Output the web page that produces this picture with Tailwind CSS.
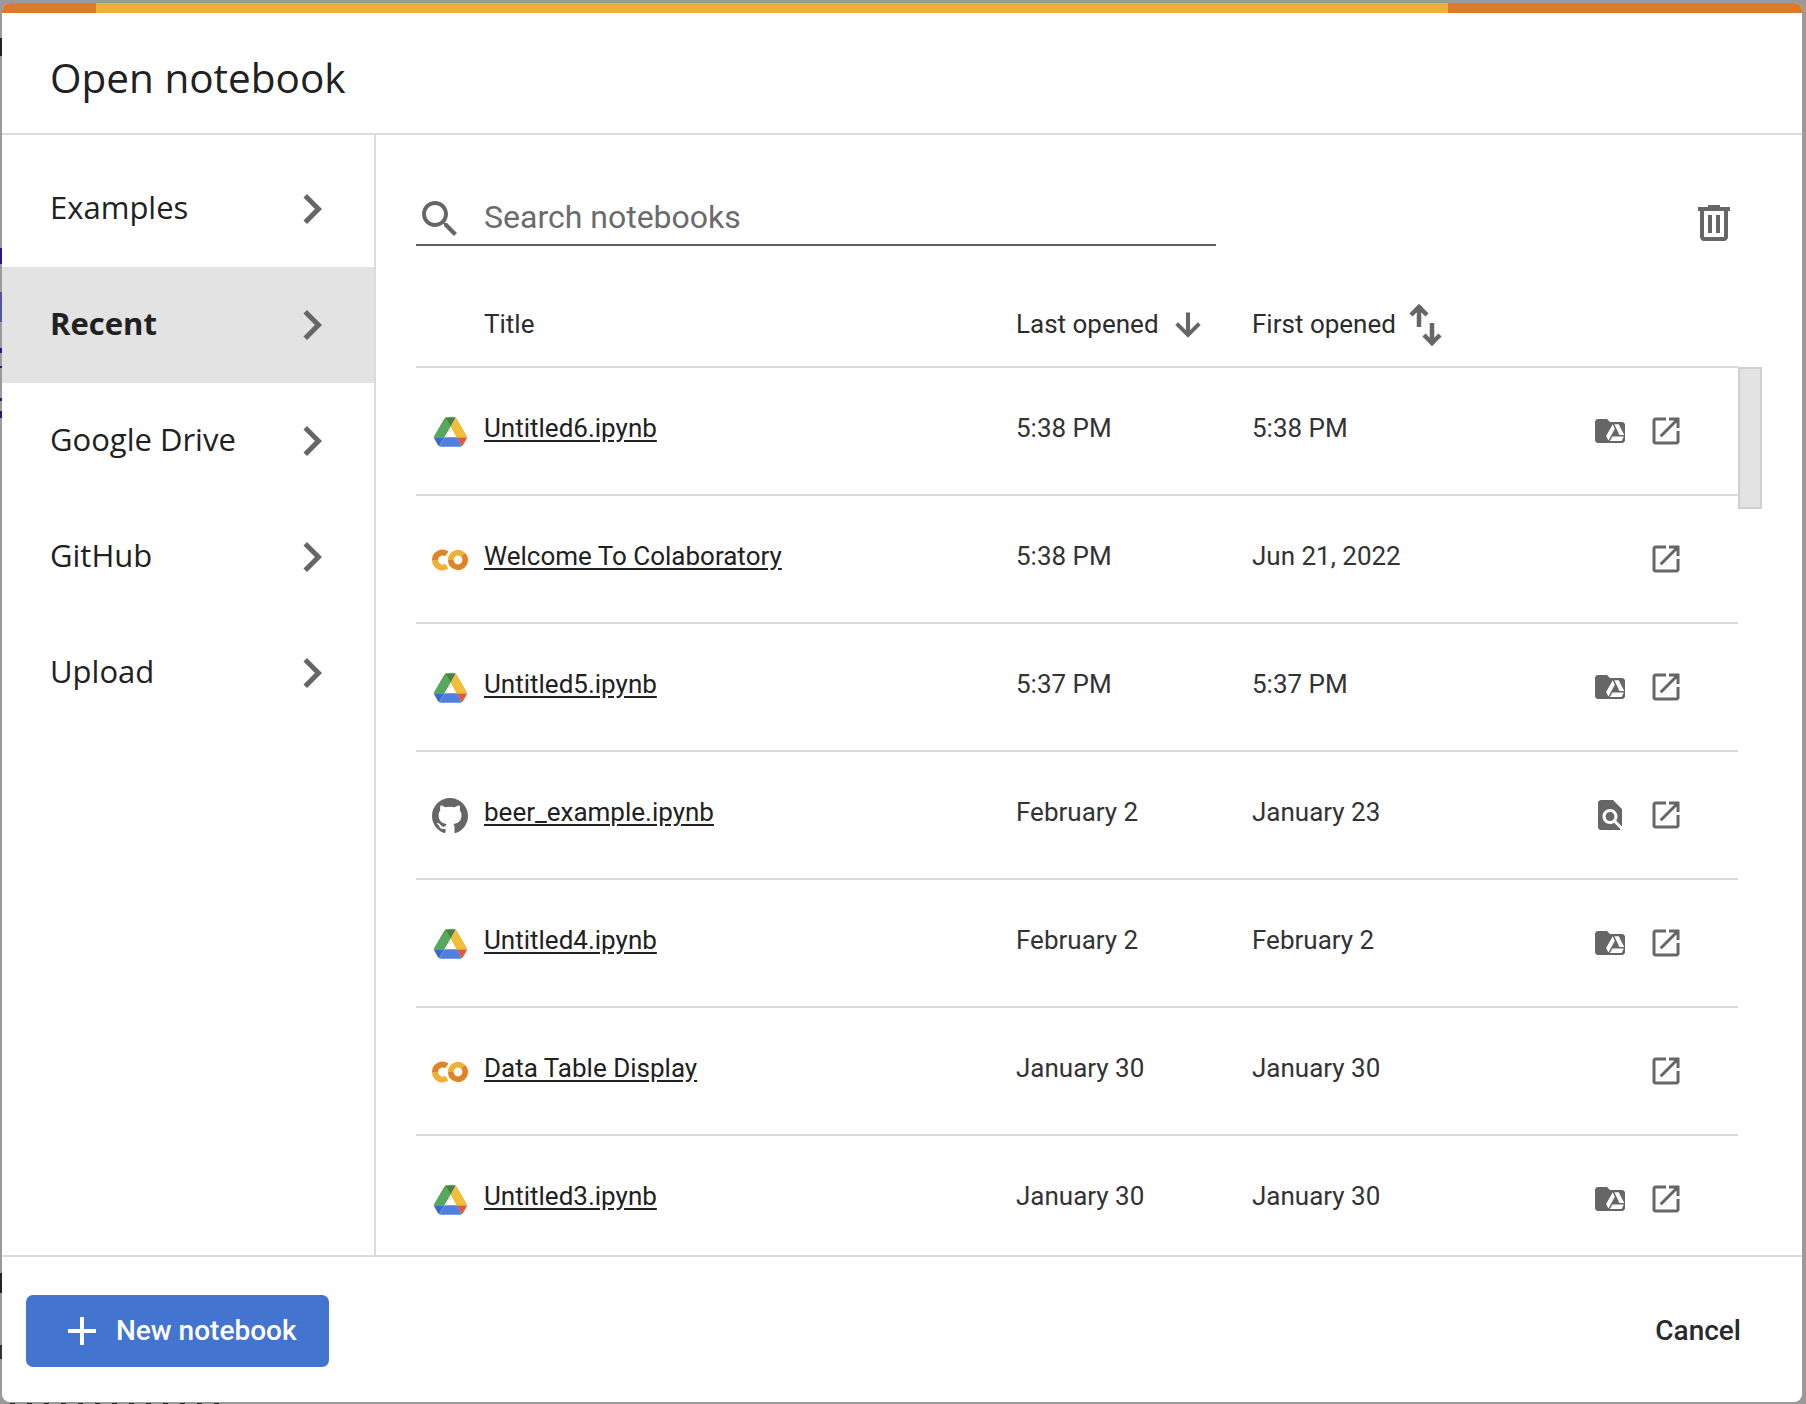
<!DOCTYPE html>
<html lang="en">
<head>
<meta charset="UTF-8">
<title>Open notebook</title>
<script src="https://cdn.jsdelivr.net/npm/@tailwindcss/browser@4"></script>
</head>
<body class="relative w-[1806px] h-[1404px] overflow-hidden bg-[#9a9a9a] font-['Roboto',sans-serif] text-[#212121]">
<svg class="hidden">
  <symbol id="chev" viewBox="0 0 24 24"><path d="M10 6L8.59 7.41 13.17 12l-4.58 4.59L10 18l6-6z"/></symbol>
  <symbol id="open" viewBox="0 0 24 24"><path d="M19 19H5V5h7V3H5c-1.11 0-2 .9-2 2v14c0 1.1.89 2 2 2h14c1.1 0 2-.9 2-2v-7h-2v7zM14 3v2h3.59l-9.83 9.83 1.41 1.41L19 6.41V10h2V3h-7z"/></symbol>
  <symbol id="folder" viewBox="0 0 24 24">
    <path d="M20 6h-8l-2-2H4c-1.1 0-2 .9-2 2v12c0 1.1.9 2 2 2h16c1.1 0 2-.9 2-2V8c0-1.1-.9-2-2-2z"/>
    <path fill="#fff" d="M13.9 7.5L9.4 15.3l1.5 3 4.3-7.6zM14.9 7.5h2.9l3.7 7.2h-3.2zM11.9 18.6l1.7-3h7.7l-1.6 3z"/>
  </symbol>
  <symbol id="drive" viewBox="0 0 87.3 78">
    <path d="m6.6 66.85 3.85 6.65c.8 1.4 1.95 2.5 3.3 3.3l13.75-23.8h-27.5c0 1.55.4 3.1 1.2 4.5z" fill="#3f68c7"/>
    <path d="m43.65 25-13.75-23.8c-1.35.8-2.5 1.9-3.3 3.3l-25.4 44a9.06 9.06 0 0 0 -1.2 4.5h27.5z" fill="#57a85c"/>
    <path d="m73.55 76.8c1.35-.8 2.5-1.9 3.3-3.3l1.6-2.75 7.65-13.25c.8-1.4 1.2-2.95 1.2-4.5h-27.502l5.852 11.5z" fill="#d9603f"/>
    <path d="m43.65 25 13.75-23.8c-1.35-.8-2.9-1.2-4.5-1.2h-18.5c-1.6 0-3.15.45-4.5 1.2z" fill="#3d8445"/>
    <path d="m59.8 53h-32.3l-13.75 23.8c1.35.8 2.9 1.2 4.5 1.2h50.8c1.6 0 3.15-.45 4.5-1.2z" fill="#4f7fe0"/>
    <path d="m73.4 26.5-12.7-22c-.8-1.4-1.95-2.5-3.3-3.3l-13.75 23.8 16.15 28h27.45c0-1.55-.4-3.1-1.2-4.5z" fill="#f0bd3d"/>
  </symbol>
  <symbol id="colab" viewBox="0 0 36 22">
    <g fill="none">
      <path d="M14.8 4.9A7.5 7.5 0 0 0 3 11" stroke="#e08327" stroke-width="6"/>
      <path d="M3 11A7.5 7.5 0 0 0 14.8 17.1" stroke="#efb035" stroke-width="6"/>
      <path d="M18.8 11A7.2 7.2 0 0 1 31 5.8" stroke="#efb035" stroke-width="5.6"/>
      <path d="M31 5.8A7.2 7.2 0 1 1 18.8 11" stroke="#e08327" stroke-width="5.6"/>
    </g>
  </symbol>
  <symbol id="github" viewBox="0 0 16 16"><path d="M8 0C3.58 0 0 3.58 0 8c0 3.54 2.29 6.53 5.47 7.59.4.07.55-.17.55-.38 0-.19-.01-.82-.01-1.49-2.01.37-2.53-.49-2.69-.94-.09-.23-.48-.94-.82-1.13-.28-.15-.68-.52-.01-.53.63-.01 1.08.58 1.23.82.72 1.21 1.87.87 2.33.66.07-.52.28-.87.51-1.07-1.78-.2-3.64-.89-3.64-3.95 0-.87.31-1.59.82-2.15-.08-.2-.36-1.02.08-2.12 0 0 .67-.21 2.2.82.64-.18 1.32-.27 2-.27.68 0 1.36.09 2 .27 1.53-1.04 2.2-.82 2.2-.82.44 1.1.16 1.92.08 2.12.51.56.82 1.27.82 2.15 0 3.07-1.87 3.75-3.65 3.95.29.25.54.73.54 1.48 0 1.07-.01 1.93-.01 2.2 0 .21.15.46.55.38A8.013 8.013 0 0016 8c0-4.42-3.58-8-8-8z"/></symbol>
  <symbol id="find" viewBox="0 0 24 24"><path d="M20 19.59V8l-6-6H6c-1.1 0-1.99.9-1.99 2L4 20c0 1.1.89 2 1.99 2H18c.45 0 .85-.15 1.19-.4l-4.43-4.43c-.8.52-1.74.83-2.76.83-2.76 0-5-2.24-5-5s2.24-5 5-5 5 2.24 5 5c0 1.02-.31 1.96-.83 2.75L20 19.59zM9 13c0 1.66 1.34 3 3 3s3-1.34 3-3-1.34-3-3-3-3 1.34-3 3z"/></symbol>
</svg>

<!-- bits of the page behind the dialog, showing at its edge -->
<div class="absolute left-0 top-[38px] w-[2px] h-[18px] bg-[#222]"></div>
<div class="absolute left-0 top-[248px] w-[2px] h-[16px] bg-[#1c1c8c]"></div>
<div class="absolute left-0 top-[292px] w-[2px] h-[30px] bg-[#55559c]"></div>
<div class="absolute left-0 top-[348px] w-[2px] h-[5px] bg-[#1c1c8c]"></div>
<div class="absolute left-0 top-[366px] w-[2px] h-[2px] bg-[#1c1c8c]"></div>
<div class="absolute left-0 top-[398px] w-[2px] h-[3px] bg-[#1c1c8c]"></div>
<div class="absolute left-0 top-[411px] w-[2px] h-[7px] bg-[#1c1c8c]"></div>
<div class="absolute left-0 top-[1273px] w-[2px] h-[20px] bg-[#222]"></div>
<div class="absolute left-0 top-[1345px] w-[2px] h-[14px] bg-[#333]"></div>
<div class="absolute left-[10px] top-[1403px] w-[215px] h-[1px] bg-[repeating-linear-gradient(90deg,#222_0_5px,transparent_5px_17px)]"></div>

<div class="relative ml-[2px] mt-[3px] w-[1800px] h-[1399px] bg-white rounded-[8px] overflow-hidden flex flex-col">
  <!-- colour strip -->
  <div class="flex h-[10px] shrink-0 bg-[#efb03a]">
    <div class="w-[94px] bg-[#dc7a2c]"></div>
    <div class="flex-1"></div>
    <div class="w-[354px] bg-[#dc7a2c]"></div>
  </div>

  <div class="h-[122px] shrink-0 border-b-2 border-[#dcdcdc] flex items-center pl-[48px] pt-[10px]">
    <h1 class="font-['Open_Sans',sans-serif] font-medium text-[40.5px] text-[#212121]">Open notebook</h1>
  </div>

  <div class="flex flex-1 min-h-0">
    <!-- sidebar -->
    <div class="w-[374px] shrink-0 border-r-2 border-[#dcdcdc] pt-[16px] font-['Open_Sans',sans-serif] text-[31px]">
      <div class="h-[116px] flex items-center justify-between pl-[48px] pr-[32px]"><span class="mb-[3px]">Examples</span><svg class="w-[60px] h-[60px] fill-[#666]"><use href="#chev"/></svg></div>
      <div class="h-[116px] flex items-center justify-between pl-[48px] pr-[32px] bg-[#e3e3e3] font-bold"><span class="mb-[3px]">Recent</span><svg class="w-[60px] h-[60px] fill-[#666]"><use href="#chev"/></svg></div>
      <div class="h-[116px] flex items-center justify-between pl-[48px] pr-[32px]"><span class="mb-[3px]">Google Drive</span><svg class="w-[60px] h-[60px] fill-[#666]"><use href="#chev"/></svg></div>
      <div class="h-[116px] flex items-center justify-between pl-[48px] pr-[32px]"><span class="mb-[3px]">GitHub</span><svg class="w-[60px] h-[60px] fill-[#666]"><use href="#chev"/></svg></div>
      <div class="h-[116px] flex items-center justify-between pl-[48px] pr-[32px]"><span class="mb-[3px]">Upload</span><svg class="w-[60px] h-[60px] fill-[#666]"><use href="#chev"/></svg></div>
    </div>

    <!-- main -->
    <div class="relative flex-1 min-w-0 flex flex-col pl-[40px] pr-[64px] pt-[60px]">
      <div class="flex justify-between items-start shrink-0">
        <div class="w-[800px] h-[51px] border-b-2 border-[#5f5f5f] flex items-start">
          <svg class="w-[48px] h-[48px] mr-[20px] fill-[#666] shrink-0" viewBox="0 0 24 24"><path d="M15.5 14h-.79l-.28-.27C15.41 12.59 16 11.11 16 9.5 16 5.91 13.09 3 9.5 3S3 5.91 3 9.5 5.91 16 9.5 16c1.61 0 3.09-.59 4.23-1.57l.27.28v.79l5 4.99L20.49 19l-4.99-5zm-6 0C7.01 14 5 11.99 5 9.5S7.01 5 9.5 5 14 7.01 14 9.5 11.99 14 9.5 14z"/></svg>
          <span class="text-[32px] leading-[44px] text-[#6b6b6b]">Search notebooks</span>
        </div>
        <svg class="w-[48px] h-[48px] mt-[4px] fill-[#666]" viewBox="0 0 24 24"><path d="M15 4V3H9v1H4v2h1v13c0 1.1.9 2 2 2h10c1.1 0 2-.9 2-2V6h1V4h-5zm2 15H7V6h10v13zM9 8h2v9H9zm4 0h2v9h-2z"/></svg>
      </div>

      <div class="mt-[36px] h-[85px] shrink-0 border-b-2 border-[#dcdcdc] grid grid-cols-[68px_532px_236px_1fr] items-center text-[26px] text-[#2c2c2c]">
        <span></span>
        <span>Title</span>
        <span class="flex items-center">Last opened<svg class="w-[36px] h-[36px] ml-[11px] fill-[#666] stroke-[#666] stroke-[0.7]" viewBox="0 0 24 24"><path d="M20 12l-1.41-1.41L13 16.17V4h-2v12.17l-5.58-5.59L4 12l8 8 8-8z"/></svg></span>
        <span class="flex items-center">First opened<svg class="w-[40px] h-[44px] ml-[13px] fill-none stroke-[#666] stroke-[4.5]" viewBox="0 0 40 44"><path d="M10 24V4M2 12l8-8 8 8"/><path d="M23 20v20M15 32l8 8 8-8"/></svg></span>
      </div>

      <div class="flex-1 min-h-0 overflow-hidden text-[26px] text-[#333]">
        <div class="h-[128px] border-b-2 border-[#d9d9d9] grid grid-cols-[68px_532px_236px_1fr_92px] items-center pr-[54px]">
          <svg class="w-[33px] h-[30px] ml-[18px] mt-[1px]"><use href="#drive"/></svg>
          <a class="underline underline-offset-[3px] text-[#212121] mb-[6px]">Untitled6.ipynb</a><span class="mb-[6px]">5:38 PM</span><span class="mb-[6px]">5:38 PM</span>
          <div class="flex justify-end gap-[20px] fill-[#666]"><svg class="w-[36px] h-[36px]"><use href="#folder"/></svg><svg class="w-[36px] h-[36px]"><use href="#open"/></svg></div>
        </div>
        <div class="h-[128px] border-b-2 border-[#d9d9d9] grid grid-cols-[68px_532px_236px_1fr_92px] items-center pr-[54px]">
          <svg class="w-[36px] h-[22px] ml-[16px] mt-[2px]"><use href="#colab"/></svg>
          <a class="underline underline-offset-[3px] text-[#212121] mb-[6px]">Welcome To Colaboratory</a><span class="mb-[6px]">5:38 PM</span><span class="mb-[6px]">Jun 21, 2022</span>
          <div class="flex justify-end gap-[20px] fill-[#666]"><svg class="w-[36px] h-[36px]"><use href="#open"/></svg></div>
        </div>
        <div class="h-[128px] border-b-2 border-[#d9d9d9] grid grid-cols-[68px_532px_236px_1fr_92px] items-center pr-[54px]">
          <svg class="w-[33px] h-[30px] ml-[18px] mt-[1px]"><use href="#drive"/></svg>
          <a class="underline underline-offset-[3px] text-[#212121] mb-[6px]">Untitled5.ipynb</a><span class="mb-[6px]">5:37 PM</span><span class="mb-[6px]">5:37 PM</span>
          <div class="flex justify-end gap-[20px] fill-[#666]"><svg class="w-[36px] h-[36px]"><use href="#folder"/></svg><svg class="w-[36px] h-[36px]"><use href="#open"/></svg></div>
        </div>
        <div class="h-[128px] border-b-2 border-[#d9d9d9] grid grid-cols-[68px_532px_236px_1fr_92px] items-center pr-[54px]">
          <svg class="w-[36px] h-[36px] ml-[16px] mt-[1px] fill-[#666]"><use href="#github"/></svg>
          <a class="underline underline-offset-[3px] text-[#212121] mb-[6px]">beer_example.ipynb</a><span class="mb-[6px]">February 2</span><span class="mb-[6px]">January 23</span>
          <div class="flex justify-end gap-[20px] fill-[#666]"><svg class="w-[36px] h-[36px]"><use href="#find"/></svg><svg class="w-[36px] h-[36px]"><use href="#open"/></svg></div>
        </div>
        <div class="h-[128px] border-b-2 border-[#d9d9d9] grid grid-cols-[68px_532px_236px_1fr_92px] items-center pr-[54px]">
          <svg class="w-[33px] h-[30px] ml-[18px] mt-[1px]"><use href="#drive"/></svg>
          <a class="underline underline-offset-[3px] text-[#212121] mb-[6px]">Untitled4.ipynb</a><span class="mb-[6px]">February 2</span><span class="mb-[6px]">February 2</span>
          <div class="flex justify-end gap-[20px] fill-[#666]"><svg class="w-[36px] h-[36px]"><use href="#folder"/></svg><svg class="w-[36px] h-[36px]"><use href="#open"/></svg></div>
        </div>
        <div class="h-[128px] border-b-2 border-[#d9d9d9] grid grid-cols-[68px_532px_236px_1fr_92px] items-center pr-[54px]">
          <svg class="w-[36px] h-[22px] ml-[16px] mt-[2px]"><use href="#colab"/></svg>
          <a class="underline underline-offset-[3px] text-[#212121] mb-[6px]">Data Table Display</a><span class="mb-[6px]">January 30</span><span class="mb-[6px]">January 30</span>
          <div class="flex justify-end gap-[20px] fill-[#666]"><svg class="w-[36px] h-[36px]"><use href="#open"/></svg></div>
        </div>
        <div class="h-[128px] border-b-2 border-[#d9d9d9] grid grid-cols-[68px_532px_236px_1fr_92px] items-center pr-[54px]">
          <svg class="w-[33px] h-[30px] ml-[18px] mt-[1px]"><use href="#drive"/></svg>
          <a class="underline underline-offset-[3px] text-[#212121] mb-[6px]">Untitled3.ipynb</a><span class="mb-[6px]">January 30</span><span class="mb-[6px]">January 30</span>
          <div class="flex justify-end gap-[20px] fill-[#666]"><svg class="w-[36px] h-[36px]"><use href="#folder"/></svg><svg class="w-[36px] h-[36px]"><use href="#open"/></svg></div>
        </div>
      </div>

      <!-- scrollbar thumb -->
      <div class="absolute left-[1362px] top-[232px] w-[24px] h-[142px] bg-[#e3e3e3] border-2 border-[#cfcfcf]"></div>
    </div>
  </div>

  <div class="h-[147px] shrink-0 border-t-2 border-[#dcdcdc] flex items-start justify-between pt-[38px] pl-[24px] pr-[61px]">
    <button class="w-[303px] h-[72px] rounded-[7px] bg-[#4374cf] text-white text-[28px] font-medium flex items-center pl-[42px]">
      <svg class="w-[28px] h-[28px] mr-[20px] stroke-white stroke-[4]" viewBox="0 0 28 28"><path d="M14 0v28M0 14h28"/></svg>New notebook
    </button>
    <span class="text-[28px] font-medium leading-[72px] text-[#2a2a2a]">Cancel</span>
  </div>
</div>
</body>
</html>
